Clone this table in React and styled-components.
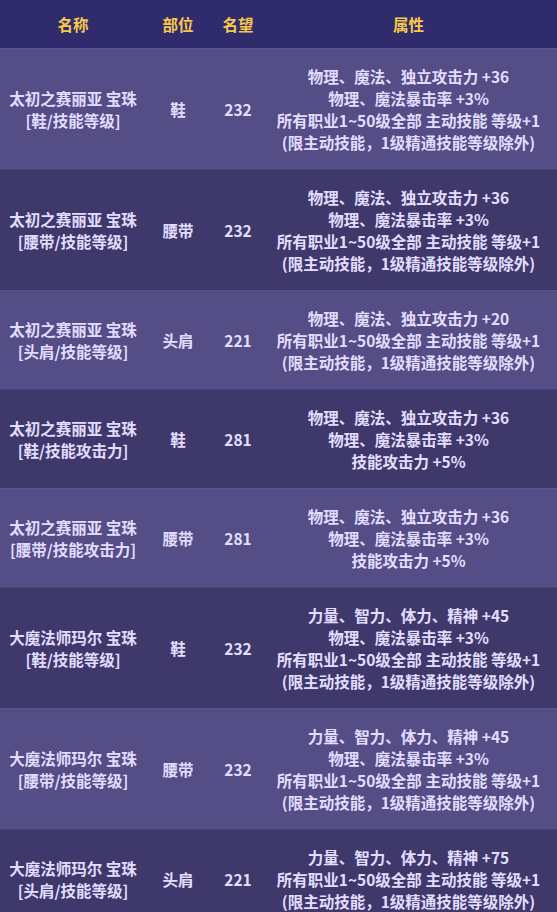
import React from "react";
import styled, { createGlobalStyle } from "styled-components";

const Global = createGlobalStyle`
  html, body { margin: 0; padding: 0; background: #3f3a6c; }
  body { font-family: "Noto Sans CJK SC", "Microsoft YaHei", sans-serif; }
`;

const Table = styled.div`
  width: 557px;
  display: flex;
  flex-direction: column;
`;

const Row = styled.div`
  display: grid;
  grid-template-columns: 146px 64px 56px 1fr;
  align-items: center;
  background: ${(p) => (p.$odd ? "#544d86" : "#3f396b")};
  border-top: 1px solid ${(p) => (p.$odd ? "#5c5590" : "#4a4478")};
  padding: 16px 6px 16px 0;
  color: #e2ddff;
  font-size: 15.5px;
  line-height: 22px;
  font-weight: 600;
  text-align: center;
`;

const HeaderRow = styled(Row)`
  background: #302b6d;
  border-top: none;
  height: 48px;
  padding-top: 0;
  padding-bottom: 0;
  color: #f7c84a;
  font-weight: 700;
  box-sizing: border-box;
`;

const Cell = styled.div`
  display: flex;
  flex-direction: column;
  align-items: center;
  white-space: nowrap;
`;

const Line = styled.span`
  display: block;
`;

const data = [
  ["太初之赛丽亚 宝珠", "[鞋/技能等级]", "鞋", "232", ["物理、魔法、独立攻击力 +36", "物理、魔法暴击率 +3%", "所有职业1~50级全部 主动技能 等级+1", "(限主动技能，1级精通技能等级除外)"]],
  ["太初之赛丽亚 宝珠", "[腰带/技能等级]", "腰带", "232", ["物理、魔法、独立攻击力 +36", "物理、魔法暴击率 +3%", "所有职业1~50级全部 主动技能 等级+1", "(限主动技能，1级精通技能等级除外)"]],
  ["太初之赛丽亚 宝珠", "[头肩/技能等级]", "头肩", "221", ["物理、魔法、独立攻击力 +20", "所有职业1~50级全部 主动技能 等级+1", "(限主动技能，1级精通技能等级除外)"]],
  ["太初之赛丽亚 宝珠", "[鞋/技能攻击力]", "鞋", "281", ["物理、魔法、独立攻击力 +36", "物理、魔法暴击率 +3%", "技能攻击力 +5%"]],
  ["太初之赛丽亚 宝珠", "[腰带/技能攻击力]", "腰带", "281", ["物理、魔法、独立攻击力 +36", "物理、魔法暴击率 +3%", "技能攻击力 +5%"]],
  ["大魔法师玛尔 宝珠", "[鞋/技能等级]", "鞋", "232", ["力量、智力、体力、精神 +45", "物理、魔法暴击率 +3%", "所有职业1~50级全部 主动技能 等级+1", "(限主动技能，1级精通技能等级除外)"]],
  ["大魔法师玛尔 宝珠", "[腰带/技能等级]", "腰带", "232", ["力量、智力、体力、精神 +45", "物理、魔法暴击率 +3%", "所有职业1~50级全部 主动技能 等级+1", "(限主动技能，1级精通技能等级除外)"]],
  ["大魔法师玛尔 宝珠", "[头肩/技能等级]", "头肩", "221", ["力量、智力、体力、精神 +75", "所有职业1~50级全部 主动技能 等级+1", "(限主动技能，1级精通技能等级除外)"]],
];

export default function App() {
  return (
    <>
      <Global />
      <Table>
        <HeaderRow>
          <Cell>名称</Cell>
          <Cell>部位</Cell>
          <Cell>名望</Cell>
          <Cell>属性</Cell>
        </HeaderRow>
        {data.map((d, i) => (
          <Row key={i} $odd={i % 2 === 0}>
            <Cell>
              <Line>{d[0]}</Line>
              <Line>{d[1]}</Line>
            </Cell>
            <Cell>{d[2]}</Cell>
            <Cell>{d[3]}</Cell>
            <Cell>
              {d[4].map((l, j) => (
                <Line key={j}>{l}</Line>
              ))}
            </Cell>
          </Row>
        ))}
      </Table>
    </>
  );
}
